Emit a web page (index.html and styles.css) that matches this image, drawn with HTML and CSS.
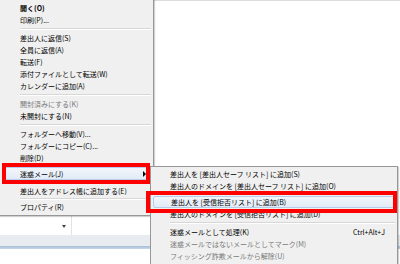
FILE: index.html
```html
<!DOCTYPE html>
<html lang="ja">
<head>
    <meta charset="UTF-8">
    <title>迷惑メール メニュー</title>
    <link rel="stylesheet" href="styles.css">
</head>
<body>
    <div class="app">
        <div class="view"></div>
        <div class="colrow">
            <div class="col"><span class="drop"></span></div>
        </div>
        <div class="bar"></div>
        <div class="rule"></div>
    </div>

    <div class="menu main">
        <div class="item bold">開く(O)</div>
        <div class="item">印刷(P)...</div>
        <div class="sep"></div>
        <div class="item">差出人に返信(S)</div>
        <div class="item">全員に返信(A)</div>
        <div class="item">転送(F)</div>
        <div class="item">添付ファイルとして転送(W)</div>
        <div class="item">カレンダーに追加(A)</div>
        <div class="sep"></div>
        <div class="item off">開封済みにする(K)</div>
        <div class="item">未開封にする(N)</div>
        <div class="sep"></div>
        <div class="item">フォルダーへ移動(V)...</div>
        <div class="item">フォルダーにコピー(C)...</div>
        <div class="item">削除(D)</div>
        <div class="item hover junk">迷惑メール(J)<span class="arrow"></span></div>
        <div class="item after-junk">差出人をアドレス帳に追加する(E)</div>
        <div class="sep short"></div>
        <div class="item">プロパティ(R)</div>
    </div>

    <div class="menu submenu">
        <div class="item">差出人を [差出人セーフ リスト] に追加(S)</div>
        <div class="item">差出人のドメインを [差出人セーフ リスト] に追加(O)</div>
        <div class="item hover block">差出人を [受信拒否リスト] に追加(B)</div>
        <div class="item">差出人のドメインを [受信拒否リスト] に追加(D)</div>
        <div class="sep"></div>
        <div class="item">迷惑メールとして処理(K)<span class="key">Ctrl+Alt+J</span></div>
        <div class="item off">迷惑メールではないメールとしてマーク(M)</div>
        <div class="item off">フィッシング詐欺メールから解除(U)</div>
    </div>

    <div class="mark mark-main"></div>
    <div class="mark mark-sub"></div>
</body>
</html>
```

FILE: styles.css
```css
body {
    margin: 0;
    width: 400px;
    height: 264px;
    overflow: hidden;
    position: relative;
    background: #fff;
    color: #000;
    font-family: "Noto Sans CJK JP", "Noto Sans", sans-serif;
    font-size: 7px;
}
.app {
    border-top: 1px solid #dcdcdc;
}
.view {
    height: 215px;
}
.colrow {
    height: 19px;
    display: flex;
}
.col {
    width: 72px;
    border-right: 1px solid #e2e2e2;
    display: flex;
    align-items: center;
    justify-content: flex-end;
    padding-right: 5px;
    box-sizing: border-box;
}
.drop {
    width: 0;
    height: 0;
    border-left: 2px solid transparent;
    border-right: 2px solid transparent;
    border-top: 3px solid #444;
    margin-top: 2px;
}
.bar {
    height: 11px;
    background: #e8ecf0;
}
.rule {
    height: 3px;
    background: linear-gradient(#a6bed8, #c8d6e5);
}

.menu {
    position: absolute;
    box-sizing: border-box;
    background: #f0f0f0;
    border: 1px solid #979797;
    box-shadow: 1px 1px 1px rgba(0, 0, 0, 0.18);
    padding: 2px;
}
.main {
    left: -1px;
    top: -1px;
    width: 155px;
}
.submenu {
    left: 150px;
    top: 166px;
    width: 248px;
    padding-top: 1px;
}
.item {
    height: 12px;
    display: flex;
    align-items: center;
    padding: 0 4px 0 18px;
    white-space: nowrap;
    box-sizing: border-box;
}
.submenu .item {
    padding-left: 17px;
    padding-right: 10px;
}
.bold {
    font-weight: bold;
}
.off {
    color: #7a7a7a;
}
.hover {
    background: linear-gradient(#f2f6fb, #e2ebf6);
    border: 1px solid #b4cdeb;
    border-radius: 2px;
}
.main .hover {
    padding-left: 17px;
}
.junk {
    height: 13px;
    margin-top: 3px;
}
.after-junk {
    margin-top: 5px;
}
.block {
    margin-top: 4px;
}
.arrow {
    margin-left: auto;
    width: 0;
    height: 0;
    border-top: 3px solid transparent;
    border-bottom: 3px solid transparent;
    border-left: 3px solid #000;
}
.key {
    margin-left: auto;
}
.sep {
    height: 1px;
    background: #d7d7d7;
    border-bottom: 1px solid #fff;
    margin: 2px 0 2px 18px;
}
.sep.short {
    margin: 1px 0 1px 18px;
}
.submenu .sep {
    margin-left: 17px;
}

.mark {
    position: absolute;
    box-sizing: border-box;
    border: 4px solid #ff0000;
}
.mark-main {
    left: 2px;
    top: 163px;
    width: 148px;
    height: 21px;
}
.mark-sub {
    left: 146px;
    top: 191px;
    width: 251px;
    height: 22px;
}
```
